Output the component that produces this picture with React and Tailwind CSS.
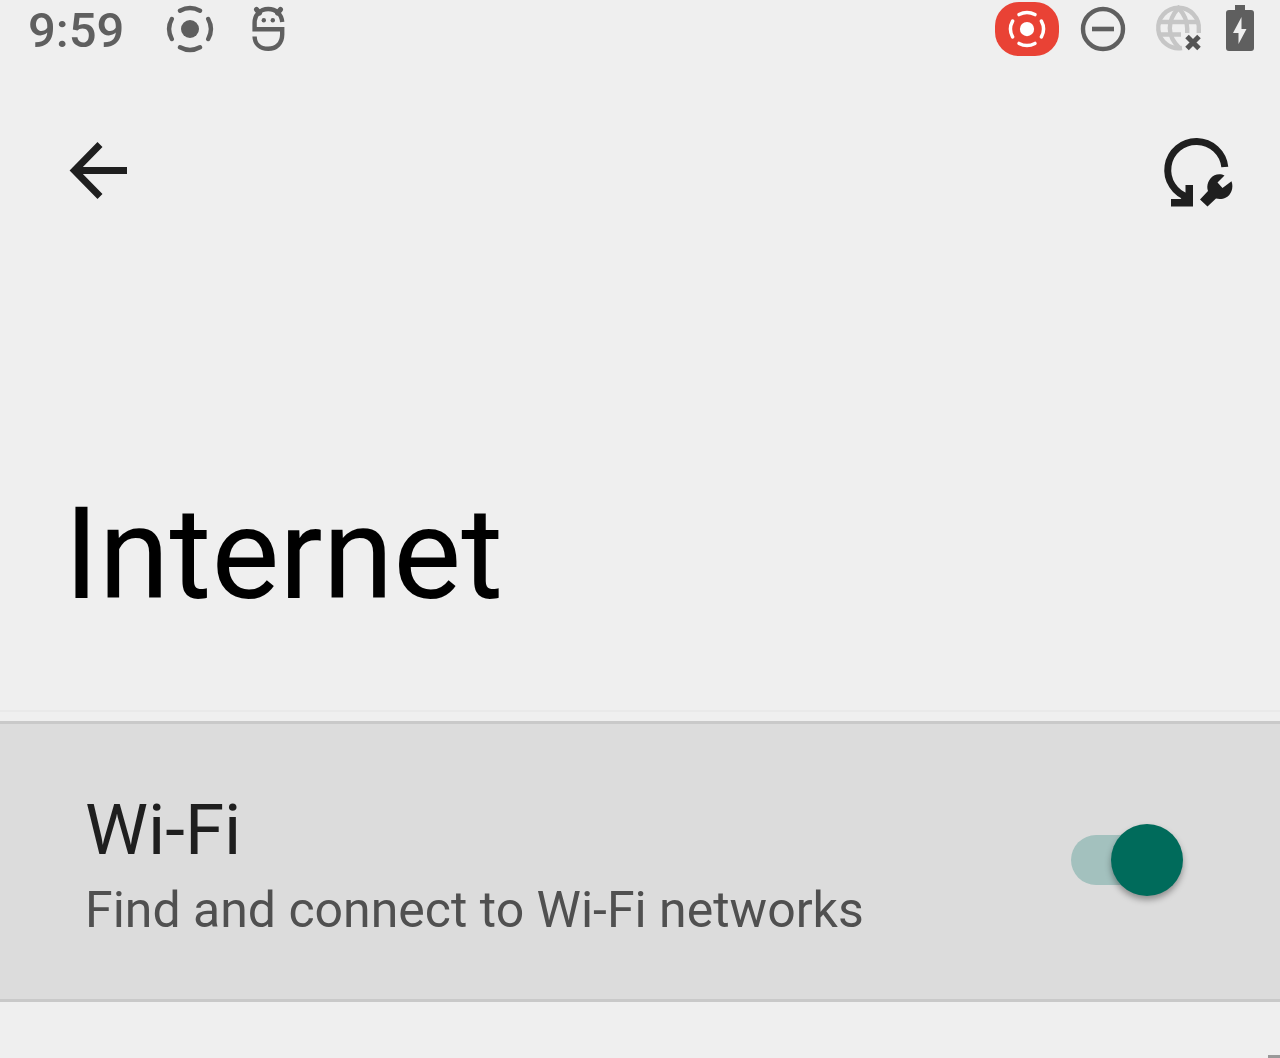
import { useState } from "react";

const RecordGlyph = ({ className }) => (
  <svg viewBox="0 0 48 48" fill="none" className={className} aria-hidden="true">
    <circle cx="24" cy="24" r="9" fill="currentColor" />
    <g stroke="currentColor" strokeWidth="4.4" strokeLinecap="round">
      <path d="M14 5.8a20.8 20.8 0 0 1 20 0" />
      <path d="M42.2 14a20.8 20.8 0 0 1 0 20" />
      <path d="M34 42.2a20.8 20.8 0 0 1-20 0" />
      <path d="M5.8 34a20.8 20.8 0 0 1 0-20" />
    </g>
  </svg>
);

const MascotIcon = () => (
  <svg viewBox="0 0 36 48" fill="none" className="h-12 w-9" aria-hidden="true">
    <path
      d="M32.2 17C31.5 9 26 4 18.2 4C10 4 4.6 10 4.6 18V24.2H32.2V29.500C32.2 38 26.5 43.8 18.2 43.8C10 43.8 4.8 39 4.6 31.500"
      stroke="currentColor"
      strokeWidth="4.400"
    />
    <path
      d="M6.500 4.500L9.500 8M30.500 4.500L27.500 8"
      stroke="currentColor"
      strokeWidth="5"
      strokeLinecap="round"
    />
    <circle cx="13.8" cy="15.2" r="2.2" fill="currentColor" />
    <circle cx="22.8" cy="15.2" r="2.2" fill="currentColor" />
  </svg>
);

const DoNotDisturbIcon = () => (
  <svg viewBox="0 0 48 48" fill="none" className="size-12" aria-hidden="true">
    <circle cx="24" cy="24" r="20" stroke="currentColor" strokeWidth="4.4" />
    <path d="M13 24h22" stroke="currentColor" strokeWidth="4.6" />
  </svg>
);

const NoInternetIcon = () => (
  <svg viewBox="0 0 48 48" fill="none" className="size-12" aria-hidden="true">
    <g stroke="#c6c6c6" strokeWidth="4.4">
      <path d="M27 43A20.3 20.3 0 1 1 43.8 24.5V28" />
      <path d="M25 43.5C17.5 36.5 14.8 30.5 14.8 23.2S17.5 9.5 23.5 3C29.5 9.5 32.2 16 32.2 23.2V28" />
      <path d="M4.5 17H42.5M4.5 29.5H26" />
    </g>
    <path d="M32 31.5l12 12M44 31.5l-12 12" stroke="#555555" strokeWidth="5" />
  </svg>
);

const BatteryIcon = () => (
  <svg viewBox="0 0 30 48" className="h-12 w-[30px]" aria-hidden="true">
    <path
      fill="currentColor"
      d="M10 0h10v5h6a3 3 0 0 1 3 3v35a3 3 0 0 1-3 3H4a3 3 0 0 1-3-3V8a3 3 0 0 1 3-3h6z"
    />
    <path fill="#efefef" d="M16.5 12v12h5L13.500 39V28H8z" />
  </svg>
);

const BackIcon = () => (
  <svg viewBox="0 0 60 60" fill="none" className="size-[60px]" aria-hidden="true">
    <path d="M32 4.5L6.5 30.5L32 56.5M6.5 30.5H59" stroke="currentColor" strokeWidth="7" />
  </svg>
);

const FixConnectivityIcon = () => (
  <svg viewBox="0 0 72 72" fill="none" className="size-[72px]" aria-hidden="true">
    <path
      d="M62.8 31A28.6 28.6 0 1 0 26.5 61.5"
      stroke="currentColor"
      strokeWidth="7"
    />
    <path fill="currentColor" d="M23.5 49H31V70.5H9V63H18.5L23.5 58z" />
    <path
      fill="currentColor"
      d="M62.500 39.500L55.500 46.500L60.500 52L69.500 45.200C72 52 69 59 64 61.500C60.500 63.300 57 63.300 54 62.500L45.500 70.500L38 63.500L46 55C44 49.500 46.500 42.500 52.500 39.300C55.500 37.800 59.500 37.800 62.500 39.500Z"
    />
  </svg>
);

const StatusBar = () => (
  <div className="flex h-[58px] items-center justify-between pl-7 pr-[25px] text-[#5f5f5f]">
    <div className="flex items-center">
      <span className="pt-[3px] text-[49px] leading-[60px] font-medium">9:59</span>
      <RecordGlyph className="ml-[42px] size-12" />
      <span className="ml-9">
        <MascotIcon />
      </span>
    </div>
    <div className="flex items-center">
      <span className="mr-5 flex h-[54px] w-16 items-center justify-center rounded-3xl bg-[#e94235] text-white">
        <RecordGlyph className="size-[38px]" />
      </span>
      <DoNotDisturbIcon />
      <span className="ml-7 mr-[22px]">
        <NoInternetIcon />
      </span>
      <BatteryIcon />
    </div>
  </div>
);

const App = () => {
  const [wifiOn, setWifiOn] = useState(true);

  return (
    <div className="flex min-h-screen flex-col bg-[#efefef] font-[Roboto,sans-serif]">
      <StatusBar />

      {/* Collapsing toolbar */}
      <header className="border-b-2 border-[#e9e9e9] text-[#1f1f1f]">
        <div className="flex items-start justify-between pt-[78px] pr-[46px] pl-[68px]">
          <button type="button" aria-label="Navigate up" className="pt-1">
            <BackIcon />
          </button>
          <button type="button" aria-label="Fix connectivity">
            <FixConnectivityIcon />
          </button>
        </div>
        <h1 className="px-16 pt-[271px] pb-[81px] text-[128px] leading-[150px] text-black">
          Internet
        </h1>
      </header>

      <main className="flex flex-1 flex-col pt-[9px]">
        <label
          htmlFor="wifi"
          className="flex items-center justify-between border-y-[3px] border-[#c9c9c9] bg-[#dcdcdc] pt-16 pb-[59px] pr-[97px] pl-[85px]"
        >
          <span className="flex flex-col gap-2">
            <span className="text-[71px] leading-[84px] text-[#1f1f1f]">Wi-Fi</span>
            <span className="text-[50px] leading-[60px] text-[#505050]">
              Find and connect to Wi-Fi networks
            </span>
          </span>
          <input
            id="wifi"
            type="checkbox"
            role="switch"
            checked={wifiOn}
            onChange={(e) => setWifiOn(e.target.checked)}
            className="relative mb-2 h-[72px] w-28 shrink-0 appearance-none before:absolute before:top-[11px] before:left-0 before:h-[50px] before:w-[100px] before:rounded-full before:bg-[#aaaaaa] after:absolute after:top-0 after:left-0 after:size-[72px] after:rounded-full after:bg-[#f5f5f5] after:shadow-[0_4px_6px_rgba(0,0,0,0.35)] checked:before:bg-[#a3c1be] checked:after:left-10 checked:after:bg-[#006b5b]"
          />
        </label>
        <div className="mt-auto ml-auto h-[3px] w-3 bg-[#999999]" />
      </main>
    </div>
  );
};

export default App;
